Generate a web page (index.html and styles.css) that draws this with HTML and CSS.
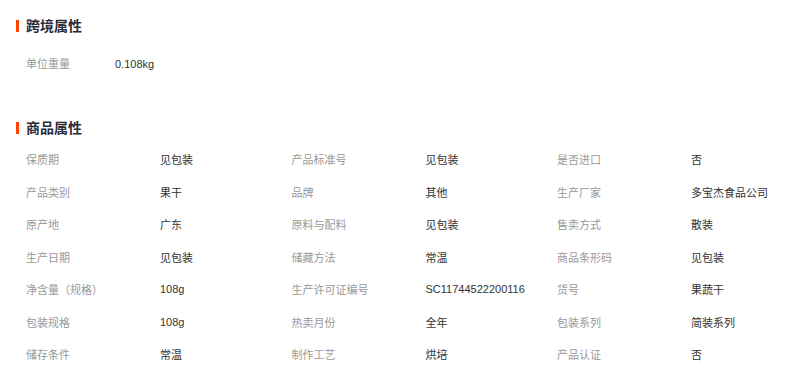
FILE: index.html
```html
<!DOCTYPE html>
<html lang="zh-CN">
<head>
<meta charset="utf-8">
<title>属性</title>
<link rel="stylesheet" href="styles.css">
</head>
<body>
<div class="page">
  <section class="block">
    <h2 class="title">跨境属性</h2>
    <div class="simple-row">
      <span class="label w89">单位重量</span>
      <span class="value">0.108kg</span>
    </div>
  </section>
  <section class="block block-2">
    <h2 class="title">商品属性</h2>
    <div class="grid">
      <span class="label">保质期</span><span class="value">见包装</span>
      <span class="label">产品标准号</span><span class="value">见包装</span>
      <span class="label">是否进口</span><span class="value">否</span>

      <span class="label">产品类别</span><span class="value">果干</span>
      <span class="label">品牌</span><span class="value">其他</span>
      <span class="label">生产厂家</span><span class="value">多宝杰食品公司</span>

      <span class="label">原产地</span><span class="value">广东</span>
      <span class="label">原料与配料</span><span class="value">见包装</span>
      <span class="label">售卖方式</span><span class="value">散装</span>

      <span class="label">生产日期</span><span class="value">见包装</span>
      <span class="label">储藏方法</span><span class="value">常温</span>
      <span class="label">商品条形码</span><span class="value">见包装</span>

      <span class="label">净含量（规格）</span><span class="value">108g</span>
      <span class="label">生产许可证编号</span><span class="value">SC11744522200116</span>
      <span class="label">货号</span><span class="value">果蔬干</span>

      <span class="label">包装规格</span><span class="value">108g</span>
      <span class="label">热卖月份</span><span class="value">全年</span>
      <span class="label">包装系列</span><span class="value">简装系列</span>

      <span class="label">储存条件</span><span class="value">常温</span>
      <span class="label">制作工艺</span><span class="value">烘培</span>
      <span class="label">产品认证</span><span class="value">否</span>
    </div>
  </section>
</div>
</body>
</html>
```

FILE: styles.css
```css
html, body {
  margin: 0;
  padding: 0;
  background: #fff;
}
body {
  font-family: "Liberation Sans", "Noto Sans CJK SC", sans-serif;
  font-size: 11px;
  color: #333;
}
.page {
  padding: 0 0 0 16px;
}
.title {
  margin: 20px 0 0 0;
  height: 12px;
  line-height: 12px;
  border-left: 3px solid #ff4400;
  padding-left: 7px;
  font-size: 14px;
  font-weight: bold;
  color: #2b2b3a;
}
.simple-row {
  display: flex;
  margin-top: 22px;
  padding-left: 10px;
  height: 20px;
  line-height: 20px;
  align-items: center;
}
.w89 {
  width: 89px;
}
.block-2 {
  margin-top: 48px;
}
.block-2 .title {
  margin-top: 0;
}
.label {
  color: #999;
  white-space: nowrap;
}
.value {
  color: #333;
  white-space: nowrap;
}
.grid {
  display: grid;
  grid-template-columns: 134px 131.5px 134px 131.5px 134px auto;
  grid-auto-rows: 32.5px;
  align-items: center;
  margin-top: 9px;
  padding-left: 10px;
}
```
